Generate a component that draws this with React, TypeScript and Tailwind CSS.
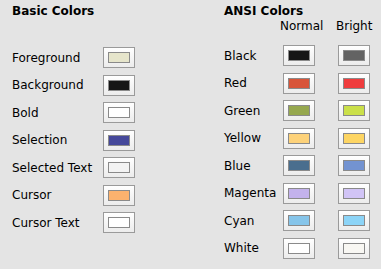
const basic: [string, string][] = [
  ['Foreground', '#e6e5cb'],
  ['Background', '#161616'],
  ['Bold', '#ffffff'],
  ['Selection', '#45489a'],
  ['Selected Text', '#f3f3f3'],
  ['Cursor', '#fcb26e'],
  ['Cursor Text', '#ffffff'],
];

const ansi: [string, string, string][] = [
  ['Black', '#161616', '#636363'],
  ['Red', '#d8553a', '#ef3d3e'],
  ['Green', '#96a84f', '#cbe04a'],
  ['Yellow', '#fdd27a', '#fdd563'],
  ['Blue', '#4a6e8e', '#7393d1'],
  ['Magenta', '#c3b2ec', '#d1c4f6'],
  ['Cyan', '#86c5ea', '#8cd4f7'],
  ['White', '#ffffff', '#f8f7f3'],
];

function Well({ color }: { color: string }) {
  return (
    <div className="flex h-[21px] w-[32px] shrink-0 items-start border border-[#9a9a9a] bg-gradient-to-b from-[#ffffff] to-[#ececec] pl-[4px] pt-[4px]">
      {/* swatch colour comes from data */}
      <div className="h-[11px] w-[22px] border border-[#8a8a8a]" style={{ backgroundColor: color }} />
    </div>
  );
}

export default function App() {
  return (
    <div className="flex h-[269px] w-[381px] bg-[#e4e4e4] pl-[12px] pt-[4px] text-[12px] leading-[14px] text-black [font-family:'DejaVu_Sans',sans-serif]">
      {/* Basic Colors */}
      <div className="w-[212px] shrink-0">
        <h2 className="font-bold">Basic Colors</h2>
        <div className="mt-[26px] flex flex-col">
          {basic.map(([label, color]) => (
            <div key={label} className="flex h-[27.5px] items-center">
              <span className="w-[91px] whitespace-nowrap">{label}</span>
              <Well color={color} />
            </div>
          ))}
        </div>
      </div>

      {/* ANSI Colors */}
      <div className="flex-1">
        <h2 className="font-bold">ANSI Colors</h2>
        <div className="mt-[1px] flex">
          <span className="ml-[56px] w-[56px]">Normal</span>
          <span>Bright</span>
        </div>
        <div className="mt-[9px] flex flex-col">
          {ansi.map(([label, normal, bright]) => (
            <div key={label} className="flex h-[27.5px] items-center gap-[23px]">
              <span className="-mr-[23px] w-[59px]">{label}</span>
              <Well color={normal} />
              <Well color={bright} />
            </div>
          ))}
        </div>
      </div>
    </div>
  );
}
